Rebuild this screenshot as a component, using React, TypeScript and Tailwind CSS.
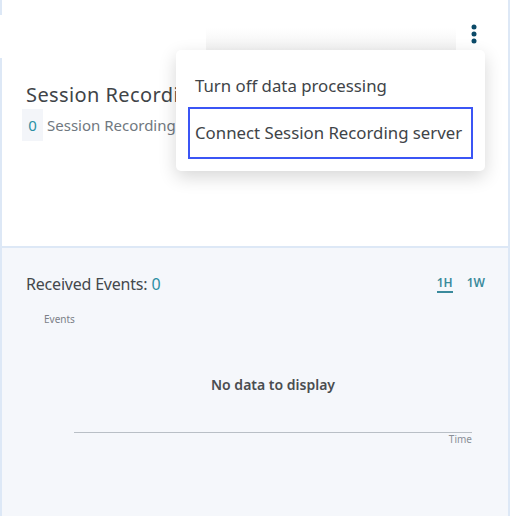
export default function App() {
  return (
    <div className="relative h-[516px] w-[514px] overflow-hidden bg-white font-['Noto_Sans',sans-serif]">
      <div className="absolute left-0 top-[15px] h-[43px] w-[206px] bg-white" />

      <div className="flex h-[516px] w-[510px] flex-col border-x-2 border-[#dde8f6]">
        <div className="h-[248px] border-b-2 border-[#dde8f6] bg-white">
          <div className="relative z-10 flex justify-end pr-[31px] pt-[24px]">
            <svg width="6" height="20" viewBox="0 0 6 20">
              <circle cx="3" cy="3" r="2.5" fill="#0b4a68" />
              <circle cx="3" cy="10" r="2.5" fill="#0b4a68" />
              <circle cx="3" cy="17" r="2.5" fill="#0b4a68" />
            </svg>
          </div>
          <div className="w-[174px] overflow-hidden whitespace-nowrap pl-[24px] pt-[38px]">
            <div className="text-[20px] leading-[26px] tracking-[0.4px] text-[#3f4448]">Session Recording servers</div>
            <div className="mt-[1px] flex items-center text-[15px] leading-[20px] text-[#707880]">
              <span className="-ml-[4px] mr-[4px] flex h-[32px] w-[21px] shrink-0 items-center justify-center bg-[#f3f5f9] text-[#2b8fa3]">0</span>
              Session Recording servers
            </div>
          </div>
        </div>
        <div className="flex-1 bg-[#f5f7fb] px-[24px] pt-[26px]">
          <div className="flex items-center justify-between">
            <div className="text-[16px] leading-[20px] tracking-[-0.2px] text-[#44484c]">
              Received Events: <span className="text-[#2b8fa3]">0</span>
            </div>
            <div className="mr-[-1px] flex gap-[14px] text-[12px] font-semibold text-[#3a8a9c]">
              <span className="border-b-2 border-[#3a8a9c] leading-[16px]">1H</span>
              <span className="leading-[16px]">1W</span>
            </div>
          </div>
          <div className="ml-[18px] mt-[19px] text-[10px] leading-[12px] text-[#7b8088]">Events</div>
          <div className="ml-[48px] w-[398px]">
            <div className="mt-[51px] text-center text-[14px] font-semibold leading-[18px] text-[#4a4d50]">No data to display</div>
            <div className="mt-[38px] h-[1px] bg-[#b9bfc6]" />
            <div className="text-right text-[10px] leading-[12px] text-[#8a9098]">Time</div>
          </div>
        </div>
      </div>

      <div className="absolute left-[206px] top-[28px] h-[22px] w-[250px] bg-gradient-to-b from-white to-[#f2f2f2]" />

      <div className="absolute left-[176px] top-[50px] h-[121px] w-[309px] rounded-[5px] bg-white shadow-[0_6px_18px_rgba(0,0,0,0.16)]">
        <div className="px-[19px] pt-[26px] text-[16.8px] leading-[20px] text-[#404448]">Turn off data processing</div>
        <div className="mx-[12px] mt-[11px] flex h-[52px] items-center border-2 border-[#3b55f5] px-[5px] text-[16.8px] leading-[20px] text-[#404448]">
          Connect Session Recording server
        </div>
      </div>
    </div>
  )
}
